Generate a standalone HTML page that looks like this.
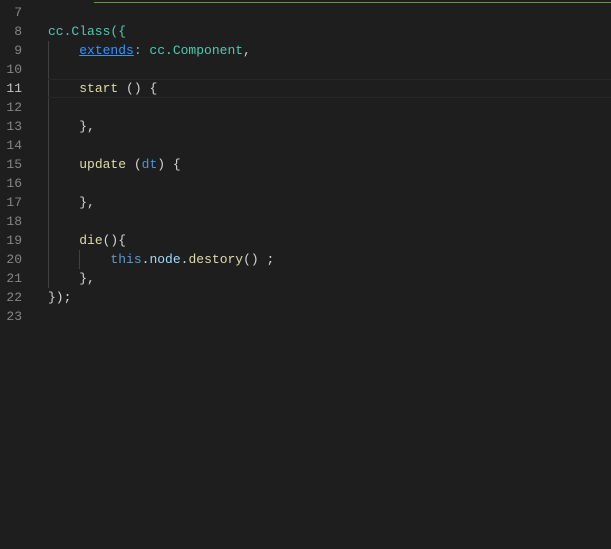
<!DOCTYPE html>
<html><head><style>
html,body{margin:0;padding:0;background:#1e1e1e;width:611px;height:549px;overflow:hidden}
.g{position:absolute;left:94px;top:2px;width:517px;height:1px;background:#5f9b3e}
.ed{position:absolute;top:3px;left:0;right:0;font-family:"Liberation Mono",monospace;font-size:13px;}
.l{height:19px;line-height:19px;position:relative;white-space:pre}
.n{position:absolute;left:0;width:22px;text-align:right;color:#858585}
.c{position:absolute;left:48px;color:#d4d4d4}
.cur{position:absolute;left:48px;right:0;top:0;height:17px;border:1px solid #282828;border-left:none;border-right:none}
.g1{position:absolute;left:48px;width:1px;background:#404040}
.g2{position:absolute;left:79px;width:1px;background:#404040}
.t{color:#4ec9b0}.f{color:#dcdcaa}.v{color:#9cdcfe}.k{color:#569cd6}.d{color:#4e94ce}
</style></head><body>
<div class="g"></div>
<div class="ed">
<div class="g1" style="top:38px;height:247px"></div>
<div class="g2" style="top:247px;height:19px"></div>
<div class="l"><span class="n">7</span></div>
<div class="l"><span class="n">8</span><span class="c"><span class="t">cc.Class({</span></span></div>
<div class="l"><span class="n">9</span><span class="c">    <span style="color:#3794ff;text-decoration:underline">extends</span><span class="t">: cc.Component</span>,</span></div>
<div class="l"><span class="n">10</span></div>
<div class="l"><div class="cur"></div><span class="n" style="color:#c6c6c6">11</span><span class="c">    <span class="f">start</span> () {</span></div>
<div class="l"><span class="n">12</span></div>
<div class="l"><span class="n">13</span><span class="c">    },</span></div>
<div class="l"><span class="n">14</span></div>
<div class="l"><span class="n">15</span><span class="c">    <span class="f">update</span> (<span class="d">dt</span>) {</span></div>
<div class="l"><span class="n">16</span></div>
<div class="l"><span class="n">17</span><span class="c">    },</span></div>
<div class="l"><span class="n">18</span></div>
<div class="l"><span class="n">19</span><span class="c">    <span class="f">die</span>(){</span></div>
<div class="l"><span class="n">20</span><span class="c">        <span class="k">this</span>.<span class="v">node</span>.<span class="f">destory</span>() ;</span></div>
<div class="l"><span class="n">21</span><span class="c">    },</span></div>
<div class="l"><span class="n">22</span><span class="c">});</span></div>
<div class="l"><span class="n">23</span></div>
</div>
</body></html>
